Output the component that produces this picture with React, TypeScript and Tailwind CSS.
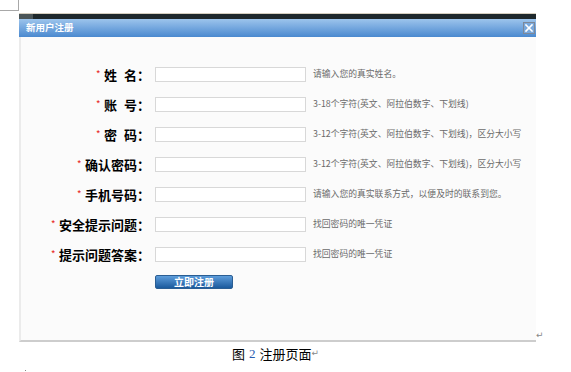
import React from "react";

const rows: { label: React.ReactNode; hint: string }[] = [
  { label: <>姓<span className="inline-block w-[7px]" />名：</>, hint: "请输入您的真实姓名。" },
  { label: <>账<span className="inline-block w-[7px]" />号：</>, hint: "3-18个字符(英文、阿拉伯数字、下划线)" },
  { label: <>密<span className="inline-block w-[7px]" />码：</>, hint: "3-12个字符(英文、阿拉伯数字、下划线)，区分大小写" },
  { label: <>确认密码：</>, hint: "3-12个字符(英文、阿拉伯数字、下划线)，区分大小写" },
  { label: <>手机号码：</>, hint: "请输入您的真实联系方式，以便及时的联系到您。" },
  { label: <>安全提示问题：</>, hint: "找回密码的唯一凭证" },
  { label: <>提示问题答案：</>, hint: "找回密码的唯一凭证" },
];

export default function App() {
  const cjk = { fontFamily: '"Noto Sans CJK SC", "Liberation Sans", sans-serif' };
  return (
    <div className="w-[571px] h-[372px] bg-white overflow-hidden" style={cjk}>
      <div className="w-[19px] h-[11px] border-r border-b border-[#a8a8a8]" />
      <div className="flex items-end mt-[2px]">
        <div className="ml-[19px] w-[517px] flex flex-col">
          <div className="h-[1px] bg-[#d6cfc0]" />
          <div className="h-[5px] bg-[#1e282c] flex">
            <div className="w-[14px] h-full bg-[#4b5558]" />
          </div>
          <div className="h-[18px] bg-gradient-to-b from-[#9cc4ec] to-[#4a89cf] flex items-center justify-between pl-[7px]">
            <span className="text-white font-bold text-[9.5px] leading-none">新用户注册</span>
            <div className="w-[12px] h-[12px] border border-[#7d8898] bg-[#79a8dc] flex items-center justify-center mr-[1px]">
              <svg width="10" height="10" viewBox="0 0 10 10">
                <path d="M2 2 L8 8 M8 2 L2 8" stroke="white" strokeWidth="1.6" strokeLinecap="square" />
              </svg>
            </div>
          </div>
          <div className="h-[305px] bg-[#fbfbfb] border-l-2 border-l-[#ebebeb] border-b-2 border-b-[#cdcdcd] flex flex-col pt-[22px]">
            {rows.map((r, i) => (
              <div key={i} className="h-[30px] flex items-center">
                <div className="w-[129px] flex justify-end items-center">
                  <span
                    className="text-[#e60000] text-[9px] leading-none mr-[4px] -mt-[2px]"
                    style={{ fontFamily: '"Liberation Sans", sans-serif' }}
                  >
                    *
                  </span>
                  <span className="text-black font-bold text-[13px] leading-none whitespace-nowrap">{r.label}</span>
                </div>
                <div className="ml-[5px] w-[151px] h-[15px] bg-white border border-[#d8d8d8]" />
                <span className="ml-[7px] text-[8.8px] text-[#6a6a6a] leading-none whitespace-nowrap">{r.hint}</span>
              </div>
            ))}
            <div className="mt-[6px] ml-[134px] w-[78px] h-[14px] rounded-[2px] border border-[#2b5e93] bg-gradient-to-b from-[#5d9ddb] to-[#1a5a9d] flex items-center justify-center">
              <span className="text-white font-bold text-[10px] leading-none">立即注册</span>
            </div>
          </div>
        </div>
        <span className="text-[9px] leading-none text-[#888] mb-[2px]" style={{ fontFamily: '"DejaVu Sans", sans-serif' }}>↵</span>
      </div>
      <div className="mt-[3px] pl-[232px] h-[16px] flex items-center text-[13px] leading-none text-black whitespace-nowrap">
        <span>图</span>
        <span className="ml-[4px] text-[#2a5db0]" style={{ fontFamily: '"Liberation Serif", serif' }}>2</span>
        <span className="ml-[4px]">注册页面</span>
        <span className="text-[9px] text-[#888]" style={{ fontFamily: '"DejaVu Sans", sans-serif' }}>↵</span>
      </div>
      <div className="ml-[25px] mt-[9px] w-[1px] h-[1px] bg-[#888]" />
    </div>
  );
}
